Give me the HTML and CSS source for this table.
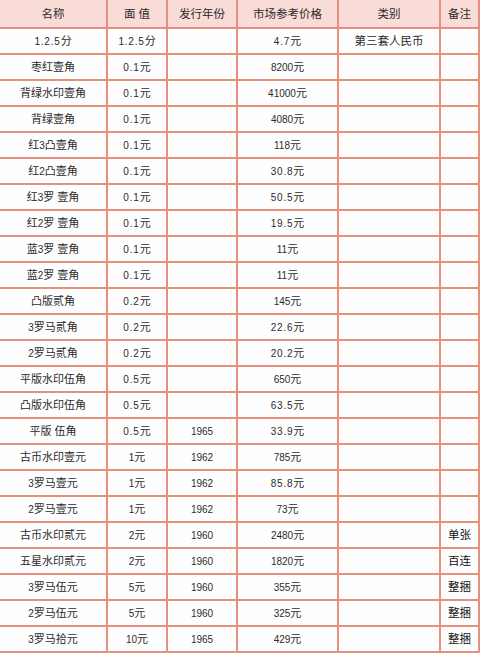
FILE: index.html
```html
<!DOCTYPE html>
<html lang="zh-CN">
<head>
<meta charset="utf-8">
<title>第三套人民币参考价格</title>
<link rel="stylesheet" href="styles.css">
</head>
<body>
<table class="price">
  <colgroup>
    <col class="c1"><col class="c2"><col class="c3"><col class="c4"><col class="c5"><col class="c6">
  </colgroup>
  <thead>
    <tr><th>名称</th><th>面&nbsp;值</th><th>发行年份</th><th>市场参考价格</th><th>类别</th><th>备注</th></tr>
  </thead>
  <tbody>
    <tr><td><span class="d">1.2.5</span>分</td><td><span class="d">1.2.5</span>分</td><td></td><td><span class="d">4.7</span>元</td><td class="cat">第三套人民币</td><td></td></tr>
    <tr><td>枣红壹角</td><td><span class="d">0.1</span>元</td><td></td><td><span class="n">8200</span>元</td><td></td><td></td></tr>
    <tr><td>背绿水印壹角</td><td><span class="d">0.1</span>元</td><td></td><td><span class="n">41000</span>元</td><td></td><td></td></tr>
    <tr><td>背绿壹角</td><td><span class="d">0.1</span>元</td><td></td><td><span class="n">4080</span>元</td><td></td><td></td></tr>
    <tr><td>红<span class="n">3</span>凸壹角</td><td><span class="d">0.1</span>元</td><td></td><td><span class="n">118</span>元</td><td></td><td></td></tr>
    <tr><td>红<span class="n">2</span>凸壹角</td><td><span class="d">0.1</span>元</td><td></td><td><span class="d">30.8</span>元</td><td></td><td></td></tr>
    <tr><td>红<span class="n">3</span>罗&nbsp;壹角</td><td><span class="d">0.1</span>元</td><td></td><td><span class="d">50.5</span>元</td><td></td><td></td></tr>
    <tr><td>红<span class="n">2</span>罗&nbsp;壹角</td><td><span class="d">0.1</span>元</td><td></td><td><span class="d">19.5</span>元</td><td></td><td></td></tr>
    <tr><td>蓝<span class="n">3</span>罗&nbsp;壹角</td><td><span class="d">0.1</span>元</td><td></td><td><span class="n">11</span>元</td><td></td><td></td></tr>
    <tr><td>蓝<span class="n">2</span>罗&nbsp;壹角</td><td><span class="d">0.1</span>元</td><td></td><td><span class="n">11</span>元</td><td></td><td></td></tr>
    <tr><td>凸版贰角</td><td><span class="d">0.2</span>元</td><td></td><td><span class="n">145</span>元</td><td></td><td></td></tr>
    <tr><td><span class="n">3</span>罗马贰角</td><td><span class="d">0.2</span>元</td><td></td><td><span class="d">22.6</span>元</td><td></td><td></td></tr>
    <tr><td><span class="n">2</span>罗马贰角</td><td><span class="d">0.2</span>元</td><td></td><td><span class="d">20.2</span>元</td><td></td><td></td></tr>
    <tr><td>平版水印伍角</td><td><span class="d">0.5</span>元</td><td></td><td><span class="n">650</span>元</td><td></td><td></td></tr>
    <tr><td>凸版水印伍角</td><td><span class="d">0.5</span>元</td><td></td><td><span class="d">63.5</span>元</td><td></td><td></td></tr>
    <tr><td>平版&nbsp;伍角</td><td><span class="d">0.5</span>元</td><td><span class="n">1965</span></td><td><span class="d">33.9</span>元</td><td></td><td></td></tr>
    <tr><td>古币水印壹元</td><td><span class="n">1</span>元</td><td><span class="n">1962</span></td><td><span class="n">785</span>元</td><td></td><td></td></tr>
    <tr><td><span class="n">3</span>罗马壹元</td><td><span class="n">1</span>元</td><td><span class="n">1962</span></td><td><span class="d">85.8</span>元</td><td></td><td></td></tr>
    <tr><td><span class="n">2</span>罗马壹元</td><td><span class="n">1</span>元</td><td><span class="n">1962</span></td><td><span class="n">73</span>元</td><td></td><td></td></tr>
    <tr><td>古币水印贰元</td><td><span class="n">2</span>元</td><td><span class="n">1960</span></td><td><span class="n">2480</span>元</td><td></td><td class="note">单张</td></tr>
    <tr><td>五星水印贰元</td><td><span class="n">2</span>元</td><td><span class="n">1960</span></td><td><span class="n">1820</span>元</td><td></td><td class="note">百连</td></tr>
    <tr><td><span class="n">3</span>罗马伍元</td><td><span class="n">5</span>元</td><td><span class="n">1960</span></td><td><span class="n">355</span>元</td><td></td><td class="note">整捆</td></tr>
    <tr><td><span class="n">2</span>罗马伍元</td><td><span class="n">5</span>元</td><td><span class="n">1960</span></td><td><span class="n">325</span>元</td><td></td><td class="note">整捆</td></tr>
    <tr><td><span class="n">3</span>罗马拾元</td><td><span class="n">10</span>元</td><td><span class="n">1965</span></td><td><span class="n">429</span>元</td><td></td><td class="note">整捆</td></tr>
  </tbody>
</table>
</body>
</html>
```
FILE: styles.css
```css
html, body {
  margin: 0;
  padding: 0;
  background: #ffffff;
}

.price {
  margin: -2px 0 0 -2px;
  width: 480px;
  table-layout: fixed;
  border-collapse: collapse;
  font-family: "Liberation Sans", "Noto Sans CJK SC", sans-serif;
  font-size: 11px;
  color: #2b2b2b;
}

.c1 { width: 108px; }
.c2 { width: 60px; }
.c3 { width: 70px; }
.c4 { width: 101px; }
.c5 { width: 102px; }
.c6 { width: 39px; }

.price th,
.price td {
  border: 2px solid #e5917e;
  padding: 0;
  text-align: center;
  vertical-align: middle;
  line-height: 14px;
  white-space: nowrap;
  overflow: hidden;
}

.price thead tr { height: 29px; }
.price tbody tr { height: 26px; }

.price th {
  background: #f9dcd7;
  font-weight: normal;
  font-size: 11.5px;
  color: #2b2b2b;
}

.price td {
  background: #fefefe;
}

.d {
  font-size: 10px;
  letter-spacing: 0.8px;
}

.n {
  font-size: 10px;
}

.cat {
  font-size: 11.5px;
}

.note {
  font-size: 11.5px;
  color: #111111;
}
```
